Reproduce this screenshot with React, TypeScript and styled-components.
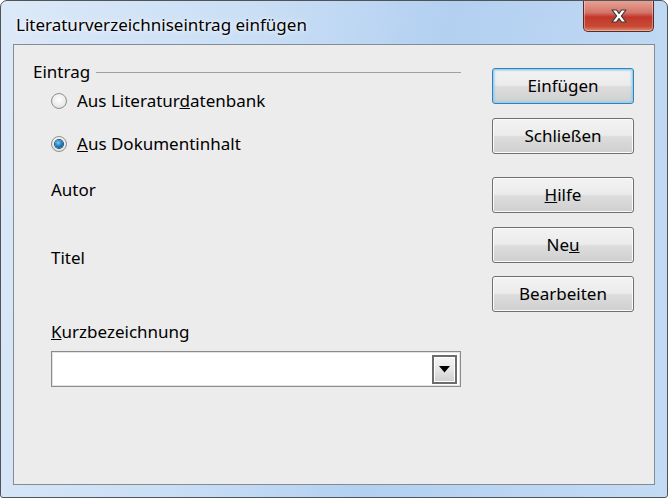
import * as React from 'react';
import styled, { createGlobalStyle } from 'styled-components';

const GlobalStyle = createGlobalStyle`
    html, body {
        margin: 0;
        padding: 0;
        background: #ffffff;
    }
    body {
        font-family: 'Noto Sans', 'DejaVu Sans', sans-serif;
    }
`;

const Window = styled.div`
    box-sizing: border-box;
    width: 668px;
    height: 498px;
    border: 1px solid #505458;
    border-radius: 7px 7px 3px 3px;
    background: linear-gradient(100deg, #dce9f8 0%, #c9def5 35%, #b3d0f1 60%, #c4dbf4 100%);
    display: flex;
    flex-direction: column;
    overflow: hidden;
`;

const TitleBar = styled.div`
    height: 43px;
    display: flex;
    justify-content: space-between;
    align-items: flex-start;
    flex-shrink: 0;
`;

const Title = styled.div`
    padding: 14px 0 0 15px;
    font-size: 17px;
    line-height: 20px;
    color: #000;
    text-shadow: 0 0 6px rgba(255, 255, 255, 0.9), 0 0 2px rgba(255, 255, 255, 0.9);
`;

const CloseButton = styled.div`
    box-sizing: border-box;
    width: 71px;
    height: 32px;
    margin: -1px 13px 0 0;
    border: 1px solid #5c2a24;
    border-top: none;
    border-radius: 0 0 5px 5px;
    background: linear-gradient(#e8a596 0%, #d4766a 40%, #c1372a 55%, #c74a35 85%, #dd8a6c 100%);
    box-shadow: inset 0 0 0 1px rgba(255, 255, 255, 0.35);
    display: flex;
    align-items: center;
    justify-content: center;
`;

const Frame = styled.div`
    flex: 1;
    display: flex;
    padding: 0 12px 12px 12px;
    min-height: 0;
`;

const Content = styled.div`
    flex: 1;
    display: flex;
    gap: 31px;
    padding: 0 20px 0 19px;
    border: 1px solid #838b95;
    background: #ececec;
    font-size: 17px;
    color: #000;
`;

const LeftColumn = styled.div`
    width: 428px;
    display: flex;
    flex-direction: column;
    padding-top: 17px;
`;

const GroupHeader = styled.div`
    display: flex;
    align-items: center;
    gap: 6px;
    height: 20px;
    line-height: 20px;
`;

const GroupLine = styled.div`
    flex: 1;
    height: 1px;
    background: #a0a0a0;
`;

const Row = styled.div<{ $top: number }>`
    margin-top: ${p => p.$top}px;
    padding-left: 18px;
    height: 20px;
    line-height: 20px;
    display: flex;
    align-items: center;
    white-space: nowrap;
`;

const RadioCircle = styled.span<{ $checked?: boolean }>`
    box-sizing: border-box;
    width: 16px;
    height: 16px;
    border-radius: 50%;
    border: 1px solid #8e8f8f;
    background: radial-gradient(circle at 50% 40%, #ffffff 0%, #f0f0f0 45%, #d5d5d5 100%);
    margin-right: 10px;
    display: flex;
    align-items: center;
    justify-content: center;
    flex-shrink: 0;

    &::after {
        content: '';
        display: ${p => (p.$checked ? 'block' : 'none')};
        width: 8px;
        height: 8px;
        border-radius: 50%;
        background: radial-gradient(circle at 40% 35%, #7ccff5 0%, #1c7cc0 50%, #0c3f6e 100%);
        box-shadow: 0 0 0 1px #2a4d6e;
    }
`;

const Combo = styled.div`
    box-sizing: border-box;
    margin: 9px 0 0 18px;
    height: 36px;
    border: 1px solid #8c8c8c;
    box-shadow: inset 0 0 0 1px #e2e2e2;
    background: #fff;
    display: flex;
    justify-content: flex-end;
    align-items: center;
    padding-right: 3px;
`;

const DropButton = styled.div`
    box-sizing: border-box;
    width: 25px;
    height: 29px;
    border: 2px solid #6c6c6c;
    box-shadow: inset 0 0 0 1px #ffffff;
    background: linear-gradient(#f6f6f6 0%, #e6e6e6 50%, #cfcfcf 100%);
    display: flex;
    align-items: center;
    justify-content: center;
`;

const RightColumn = styled.div`
    width: 142px;
    display: flex;
    flex-direction: column;
    padding-top: 23px;
`;

const Button = styled.div<{ $default?: boolean; $top: number }>`
    box-sizing: border-box;
    margin-top: ${p => p.$top}px;
    height: 36px;
    border: 1px solid ${p => (p.$default ? '#3c7fb1' : '#707070')};
    border-radius: 3px;
    background: linear-gradient(#f3f3f3 0%, #ebebeb 48%, #dddddd 52%, #cfcfcf 100%);
    box-shadow: ${p =>
        p.$default
            ? 'inset 0 0 0 1px #8fd2f4, inset 0 0 2px 2px rgba(140, 205, 240, 0.6)'
            : 'inset 0 0 0 1px #fbfbfb'};
    display: flex;
    align-items: center;
    justify-content: center;
    font-size: 17px;
    line-height: 20px;
`;

const CloseIcon = () => (
    <svg width="22" height="16" viewBox="0 0 22 16">
        <path
            d="M4 2 L8.5 2 L11 5.5 L13.5 2 L18 2 L13.3 8 L18 14 L13.5 14 L11 10.5 L8.5 14 L4 14 L8.7 8 Z"
            fill="#ffffff"
            stroke="#3a3a3a"
            strokeWidth="1.2"
            strokeLinejoin="round"
        />
    </svg>
);

const Arrow = () => (
    <svg width="11" height="7" viewBox="0 0 11 7">
        <path d="M0 0 L11 0 L5.5 6.5 Z" fill="#000" />
    </svg>
);

export default function App() {
    return (
        <>
            <GlobalStyle />
            <Window>
                <TitleBar>
                    <Title>Literaturverzeichniseintrag einfügen</Title>
                    <CloseButton>
                        <CloseIcon />
                    </CloseButton>
                </TitleBar>
                <Frame>
                    <Content>
                        <LeftColumn>
                            <GroupHeader>
                                <span>Eintrag</span>
                                <GroupLine />
                            </GroupHeader>
                            <Row $top={9}>
                                <RadioCircle />
                                <span>
                                    Aus Literatur<u>d</u>atenbank
                                </span>
                            </Row>
                            <Row $top={23}>
                                <RadioCircle $checked />
                                <span>
                                    <u>A</u>us Dokumentinhalt
                                </span>
                            </Row>
                            <Row $top={26}>Autor</Row>
                            <Row $top={48}>Titel</Row>
                            <Row $top={54}>
                                <span>
                                    <u>K</u>urzbezeichnung
                                </span>
                            </Row>
                            <Combo>
                                <DropButton>
                                    <Arrow />
                                </DropButton>
                            </Combo>
                        </LeftColumn>
                        <RightColumn>
                            <Button $default $top={0}>Einfügen</Button>
                            <Button $top={14}>Schließen</Button>
                            <Button $top={23}>
                                <span>
                                    <u>H</u>ilfe
                                </span>
                            </Button>
                            <Button $top={14}>
                                <span>
                                    Ne<u>u</u>
                                </span>
                            </Button>
                            <Button $top={13}>Bearbeiten</Button>
                        </RightColumn>
                    </Content>
                </Frame>
            </Window>
        </>
    );
}
